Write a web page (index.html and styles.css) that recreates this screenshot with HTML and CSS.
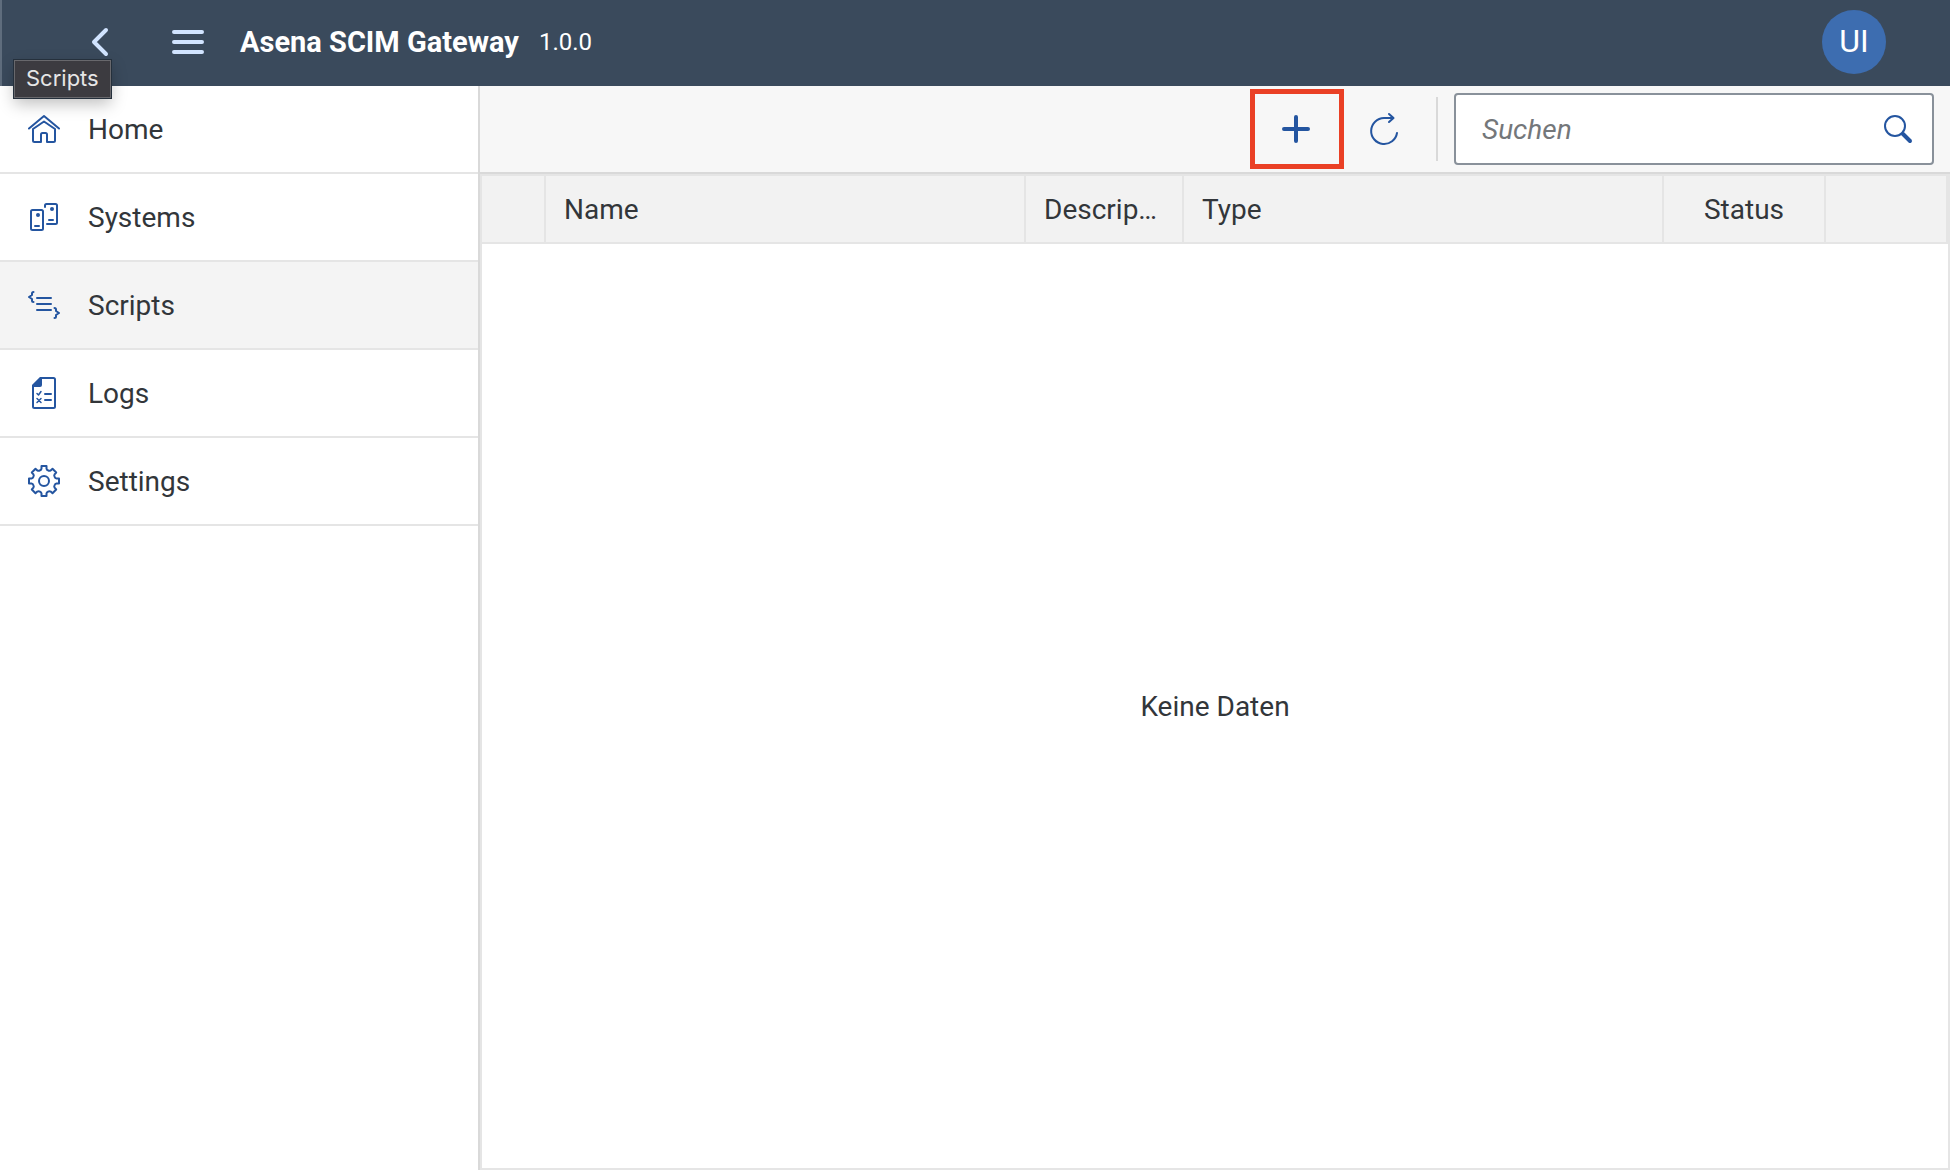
FILE: index.html
```html
<!DOCTYPE html>
<html lang="de">
<head>
<meta charset="utf-8">
<meta name="viewport" content="width=device-width, initial-scale=1">
<title>Asena SCIM Gateway</title>
<link rel="stylesheet" href="styles.css">
</head>
<body>
<header class="shell">
  <button class="shell-button" type="button" aria-label="Zurück">
    <svg width="32" height="32" viewBox="0 0 32 32"><path d="M22 4 L10 16 L22 28" /></svg>
  </button>
  <button class="shell-button" type="button" aria-label="Menü">
    <svg width="32" height="32" viewBox="0 0 32 32"><path d="M2 6H30M2 16H30M2 26H30" /></svg>
  </button>
  <h1 class="title">Asena SCIM Gateway</h1>
  <span class="version">1.0.0</span>
  <button class="avatar" type="button">UI</button>
  <div class="tooltip" role="tooltip">Scripts</div>
</header>
<div class="layout">
  <nav class="sidebar">
    <a class="nav-item" href="#home">
      <svg class="icon" width="32" height="32" viewBox="0 0 32 32"><path d="M1 15.500 16 3 31 15.500"/><path d="M5 16V27.500Q5 29 6.500 29H13V21.500Q13 20 14.500 20H17.500Q19 20 19 21.500V29H25.500Q27 29 27 27.500V16L16 8.500Z"/></svg>
      <span>Home</span>
    </a>
    <a class="nav-item" href="#systems">
      <svg class="icon" width="32" height="32" viewBox="0 0 32 32"><rect x="3" y="9" width="12" height="20" rx="1.500"/><path d="M17 6V4.500Q17 3 18.500 3H27.500Q29 3 29 4.500V21.500Q29 23 27.500 23H19M7 25H11M21 19H25"/><circle class="dot" cx="10" cy="14" r="2"/><circle class="dot" cx="24" cy="8" r="2"/></svg>
      <span>Systems</span>
    </a>
    <a class="nav-item selected" href="#scripts" aria-current="page">
      <svg class="icon" width="32" height="32" viewBox="0 0 32 32"><path d="M5.500 3Q4 3 4 4.500V6L1 8 4 10V11.500Q4 13 5.500 13M9 9H23M9 15H23M9 21H23M26.500 19Q28 19 28 20.500V22L31 24 28 26V27.500Q28 29 26.500 29"/></svg>
      <span>Scripts</span>
    </a>
    <a class="nav-item" href="#logs">
      <svg class="icon" width="32" height="32" viewBox="0 0 32 32"><path d="M13 1H25.500Q27 1 27 2.500V29.500Q27 31 25.500 31H6.500Q5 31 5 29.500V9Z"/><path class="dot" d="M4 10V8L12 0H14V8Q14 10 12 10Z"/><path class="thin" d="M9 16.500 10.500 18 13 14.500M9 21.500 13 25.500M13 21.500 9 25.500"/><path d="M17 17H23M17 23H23"/></svg>
      <span>Logs</span>
    </a>
    <a class="nav-item" href="#settings">
      <svg class="icon" width="32" height="32" viewBox="0 0 32 32"><path d="M13.500 1H18.500V3.500Q18.700 4.900 20 5.300Q21.400 6.200 22.700 5.400L24.500 3.800 28.200 7.500 26.600 9.300Q25.800 10.600 26.700 12Q27.100 13.300 28.500 13.500H31V18.500H28.500Q27.100 18.700 26.700 20Q25.800 21.400 26.600 22.700L28.200 24.500 24.500 28.200 22.700 26.600Q21.400 25.800 20 26.700Q18.700 27.100 18.500 28.500V31H13.500V28.500Q13.300 27.100 12 26.700Q10.600 25.800 9.300 26.600L7.500 28.200 3.800 24.500 5.400 22.700Q6.200 21.400 5.300 20Q4.900 18.700 3.500 18.500H1V13.500H3.500Q4.900 13.300 5.300 12Q6.200 10.600 5.400 9.300L3.800 7.500 7.500 3.800 9.300 5.400Q10.600 6.200 12 5.300Q13.300 4.900 13.500 3.500Z"/><circle cx="16" cy="16" r="5"/></svg>
      <span>Settings</span>
    </a>
  </nav>
  <main class="content">
    <div class="toolbar" role="toolbar">
      <button class="tool-button highlighted" type="button" aria-label="Hinzufügen">
        <svg class="icon bold" width="32" height="32" viewBox="0 0 32 32"><path d="M3 16H27M15 4V28"/></svg>
      </button>
      <button class="tool-button" type="button" aria-label="Aktualisieren">
        <svg class="icon" width="36" height="36" viewBox="0 0 36 36"><path d="M31 22A13 13 0 1 1 18 7H27M23 3 27.500 7 23 11"/></svg>
      </button>
      <span class="separator"></span>
      <form class="search" role="search">
        <input class="search-input" type="text" placeholder="Suchen" aria-label="Suchen">
        <button class="search-button" type="button" aria-label="Suche starten">
          <svg class="icon" width="32" height="32" viewBox="0 0 32 32"><circle cx="13" cy="13" r="10"/><path class="handle" d="M21 21 28 28"/></svg>
        </button>
      </form>
    </div>
    <table class="scripts">
      <colgroup><col class="col-select"><col class="col-wide"><col class="col-description"><col class="col-wide"><col class="col-status"><col></colgroup>
      <thead>
        <tr><th></th><th>Name</th><th>Description</th><th>Type</th><th class="centered">Status</th><th></th></tr>
      </thead>
      <tbody>
        <tr><td class="empty" colspan="6">Keine Daten</td></tr>
      </tbody>
    </table>
  </main>
</div>
</body>
</html>
```
FILE: styles.css
```css
* { box-sizing: border-box; }

body {
  margin: 0;
  min-height: 100vh;
  display: flex;
  flex-direction: column;
  background: #fff;
  color: #32363a;
  font: 28px/32px Roboto, "Liberation Sans", sans-serif;
}

button, input { font: inherit; }

button {
  display: flex;
  align-items: center;
  justify-content: center;
  padding: 0;
  border: 0;
  background: none;
  cursor: pointer;
}

svg {
  fill: none;
  stroke-linecap: round;
  stroke-linejoin: round;
}

.shell {
  position: relative;
  display: flex;
  align-items: center;
  height: 86px;
  padding: 0 64px 2px 54px;
  border-left: 2px solid #5f6d7d;
  background: #3a4a5c;
  color: #fff;
}

.shell-button {
  width: 88px;
  height: 72px;
}

.shell-button svg {
  stroke: #d1e4ff;
  stroke-width: 4;
}

.title {
  margin: 0 20px 0 8px;
  font-size: 29px;
  font-weight: 700;
  line-height: 32px;
}

.version { font-size: 24px; }

.avatar {
  width: 64px;
  height: 64px;
  padding-bottom: 2px;
  margin-left: auto;
  border-radius: 50%;
  background: #3d6db0;
  color: #fff;
  font-size: 32px;
}

.tooltip {
  position: absolute;
  left: 12px;
  top: 60px;
  z-index: 1;
  padding: 2px 11px 4px;
  border: 1px solid #68686c;
  outline: 1px solid #25303c;
  background: #3c3b40;
  box-shadow: 0 6px 16px rgba(0, 0, 0, .25);
  color: #e6e6e6;
  font: 22px/30px Inter, sans-serif;
}

.layout {
  display: flex;
  flex: 1;
}

.sidebar {
  flex: 0 0 480px;
  border-right: 2px solid #d9d9d9;
}

.nav-item {
  display: flex;
  align-items: center;
  gap: 28px;
  height: 88px;
  padding-left: 28px;
  border-bottom: 2px solid #e5e5e5;
  color: inherit;
  text-decoration: none;
}

.nav-item span { padding-top: 2px; }

.nav-item.selected { background: #f4f4f4; }

.icon {
  stroke: #2455a0;
  stroke-width: 2;
}

.icon.bold { stroke-width: 4; }
.icon .dot { fill: #2455a0; stroke: none; }
.icon .thin { stroke-width: 1.5; }
.icon .handle { stroke-width: 4; }

.content {
  flex: 1;
  min-width: 0;
}

.toolbar {
  display: flex;
  align-items: center;
  justify-content: flex-end;
  height: 88px;
  padding-right: 16px;
  border-bottom: 2px solid #d9d9d9;
  background: #f7f7f7;
}

.tool-button {
  width: 80px;
  height: 80px;
}

.tool-button.highlighted {
  width: 94px;
  border: 5px solid #ea4025;
}

.separator {
  width: 2px;
  height: 64px;
  margin: 0 16px 0 12px;
  background: #d9d9d9;
}

.search {
  display: flex;
  width: 480px;
  height: 72px;
  border: 2px solid #89919a;
  border-radius: 4px;
  background: #fff;
}

.search-input {
  flex: 1;
  min-width: 0;
  padding: 2px 0 0 26px;
  border: 0;
  outline: 0;
  background: none;
  color: inherit;
}

.search-input::placeholder {
  color: #74777a;
  font-style: italic;
}

.search-button { width: 68px; }

.scripts {
  width: 100%;
  table-layout: fixed;
  border: 2px solid #e5e5e5;
  border-spacing: 0;
}

.col-select { width: 64px; }
.col-wide { width: 480px; }
.col-description { width: 158px; }
.col-status { width: 162px; }

th {
  height: 68px;
  padding: 2px 18px 0;
  overflow: hidden;
  border-right: 2px solid #e5e5e5;
  border-bottom: 2px solid #e5e5e5;
  background: #f2f2f2;
  font-weight: 400;
  text-align: left;
  text-overflow: ellipsis;
  white-space: nowrap;
}

th.centered { text-align: center; }

.empty {
  height: calc(100vh - 246px);
  padding: 2px 0 0;
  text-align: center;
}
```
